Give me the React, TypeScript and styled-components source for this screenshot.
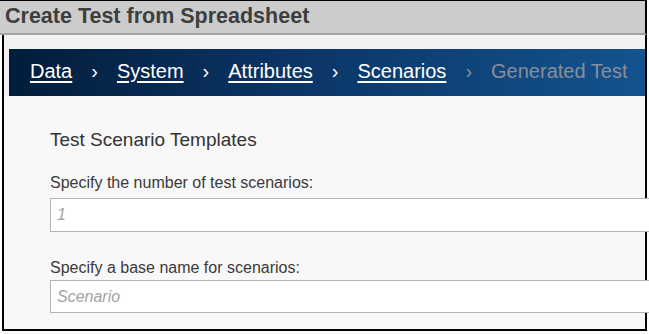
import React from 'react';
import styled, { createGlobalStyle } from 'styled-components';

const GlobalStyle = createGlobalStyle`
  html, body {
    margin: 0;
    padding: 0;
    background: #ffffff;
    overflow: hidden;
  }
  body {
    font-family: "Liberation Sans", Arial, sans-serif;
  }
`;

const Window = styled.div`
  width: 647px;
  display: flex;
  flex-direction: column;
`;

const TitleBar = styled.div`
  height: 35px;
  box-sizing: border-box;
  display: flex;
  align-items: center;
  padding: 0 0 2px 5px;
  background: #cccccc;
  border-top: 1px solid #000;
  border-right: 2px solid #000;
  border-bottom: 2px solid #a2a2a2;
  color: #3e3e3e;
  font-size: 21.5px;
  font-weight: bold;
  white-space: nowrap;
`;

const Frame = styled.div`
  margin-left: 2px;
  border: 2px solid #000;
  border-top: none;
  background: #f8f8f8;
  display: flex;
  flex-direction: column;
`;

const NavStrip = styled.div`
  background: #f2f2f2;
  padding: 14px 0 0 5px;
`;

const Nav = styled.nav`
  height: 47px;
  box-sizing: border-box;
  display: flex;
  align-items: center;
  padding: 0 0 3px 21px;
  background: linear-gradient(90deg, #021d3b 0%, #0b3566 45%, #13538f 100%);
  font-size: 20px;
  white-space: nowrap;
  overflow: hidden;
`;

const Crumb = styled.a<{ $disabled?: boolean }>`
  color: ${(p) => (p.$disabled ? '#8a8f98' : '#ffffff')};
  text-decoration: ${(p) => (p.$disabled ? 'none' : 'underline')};
  text-decoration-thickness: 2px;
  text-underline-offset: 3px;
  cursor: pointer;
`;

const Sep = styled.span<{ $dim?: boolean }>`
  margin: 0 19px;
  color: ${(p) => (p.$dim ? '#8a8f98' : '#ffffff')};
`;

const Content = styled.div`
  padding: 33px 0 16px 46px;
`;

const Heading = styled.h2`
  margin: 0 0 23px;
  font-size: 19px;
  font-weight: normal;
  color: #333333;
`;

const Label = styled.label<{ $tight?: boolean }>`
  display: block;
  margin: 0 0 ${(p) => (p.$tight ? 3 : 6)}px;
  font-size: 16px;
  color: #3a3a3a;
`;

const Field = styled.input`
  display: block;
  width: 620px;
  height: 34px;
  box-sizing: border-box;
  margin: 0 0 27px;
  padding: 0 6px;
  border: 1px solid #b3b3b3;
  background: #ffffff;
  font-family: "Liberation Sans", Arial, sans-serif;
  font-size: 16px;
  font-style: italic;
  outline: none;

  &::placeholder {
    color: #a3a3a3;
  }

  &:last-child {
    height: 33px;
    margin-bottom: 0;
  }
`;

const BottomStrip = styled.div`
  margin-left: 3px;
  width: 642px;
  height: 4px;
  background: #f7f7f7;
`;

const crumbs = ['Data', 'System', 'Attributes', 'Scenarios'];

export default function App() {
  return (
    <>
      <GlobalStyle />
      <Window>
        <TitleBar>Create Test from Spreadsheet</TitleBar>
        <Frame>
          <NavStrip>
            <Nav>
              {crumbs.map((c) => (
                <React.Fragment key={c}>
                  <Crumb>{c}</Crumb>
                  <Sep $dim={c === 'Scenarios'}>›</Sep>
                </React.Fragment>
              ))}
              <Crumb $disabled>Generated Test</Crumb>
            </Nav>
          </NavStrip>
          <Content>
            <Heading>Test Scenario Templates</Heading>
            <Label>Specify the number of test scenarios:</Label>
            <Field placeholder="1" />
            <Label $tight>Specify a base name for scenarios:</Label>
            <Field placeholder="Scenario" />
          </Content>
        </Frame>
        <BottomStrip />
      </Window>
    </>
  );
}
